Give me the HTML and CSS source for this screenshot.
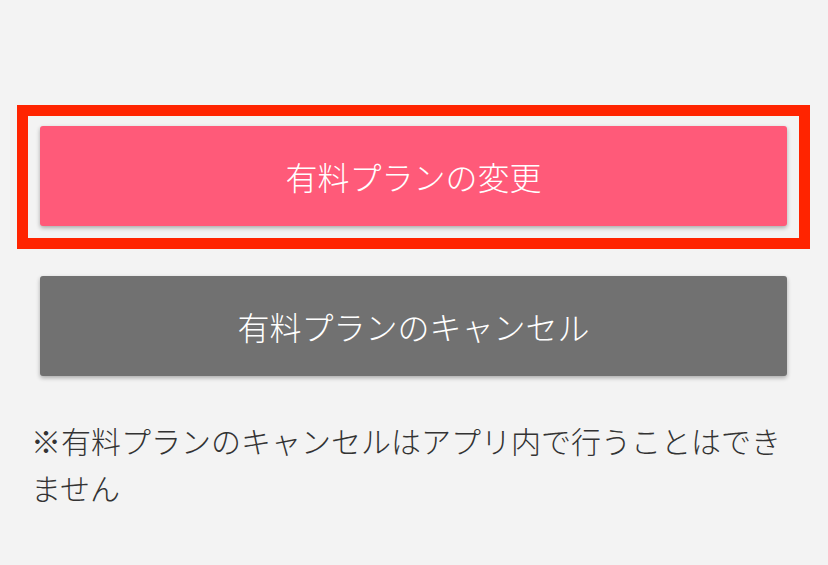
FILE: index.html
```html
<!DOCTYPE html>
<html lang="ja">
<head>
<meta charset="utf-8">
<link rel="stylesheet" href="styles.css">
</head>
<body>
<div class="page">
  <div class="highlight">
    <button class="btn btn-pink">有料プランの変更</button>
  </div>
  <div class="row">
    <button class="btn btn-gray">有料プランのキャンセル</button>
  </div>
  <p class="note">※有料プランのキャンセルはアプリ内で行うことはできません</p>
</div>
</body>
</html>
```
FILE: styles.css
```css
html, body {
  margin: 0;
  padding: 0;
  background: #f3f3f3;
}
.page {
  padding-top: 105px;
  font-family: "Noto Sans CJK JP", "Noto Sans", sans-serif;
}
.highlight {
  margin: 0 18px 0 17px;
  border: 11px solid #ff2400;
  padding: 10px 12px 12px 12px;
}
.row {
  margin: 27px 41px 0 40px;
}
.btn {
  display: flex;
  align-items: center;
  justify-content: center;
  width: 100%;
  height: 100px;
  border: none;
  border-radius: 3px;
  color: #ffffff;
  font-family: "Noto Sans CJK JP", "Noto Sans", sans-serif;
  font-size: 32px;
  font-weight: 300;
  box-shadow: 0 2px 4px rgba(0, 0, 0, 0.3);
  padding: 0;
}
.btn-pink {
  background: #ff5a79;
}
.btn-gray {
  background: #717171;
}
.note {
  margin: 41px 28px 0 31px;
  font-size: 30px;
  font-weight: 300;
  line-height: 47px;
  color: #333333;
}
```
